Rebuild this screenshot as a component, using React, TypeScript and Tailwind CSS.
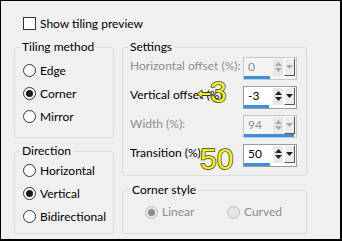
import type { ReactNode } from 'react';

const FONT = "font-['Lato','Noto_Sans',sans-serif]";

function Radio({ checked, disabled }: { checked?: boolean; disabled?: boolean }) {
  return (
    <span
      className={`flex h-[13px] w-[13px] shrink-0 items-center justify-center rounded-full border ${
        disabled ? 'border-[#bcbcbc] bg-[#e6e6e6]' : 'border-[#333] bg-white'
      }`}
    >
      {checked && (
        <span className={`h-[7px] w-[7px] rounded-full ${disabled ? 'bg-[#8c8c8c]' : 'bg-[#1a1a1a]'}`} />
      )}
    </span>
  );
}

function RadioRow({
  label,
  checked,
  disabled,
  className = '',
}: {
  label: string;
  checked?: boolean;
  disabled?: boolean;
  className?: string;
}) {
  return (
    <div className={`flex h-[23px] items-center gap-[4px] ${className}`}>
      <Radio checked={checked} disabled={disabled} />
      <span className={disabled ? 'text-[#8d8d8d]' : 'text-black'}>{label}</span>
    </div>
  );
}

function Group({
  title,
  className,
  legendClass = 'ml-[5px]',
  children,
}: {
  title: string;
  className: string;
  legendClass?: string;
  children: ReactNode;
}) {
  return (
    <fieldset className={`rounded-[3px] border border-[#dcdcdc] ${className}`}>
      <legend className={`px-[2px] leading-[16px] text-black ${legendClass}`}>{title}</legend>
      {children}
    </fieldset>
  );
}

function Spin({ value, pct, disabled }: { value: string; pct: number; disabled?: boolean }) {
  return (
    <div
      className={`flex h-[23px] w-[54px] shrink-0 flex-col border ${
        disabled ? 'border-[#c8c8c8] bg-[#f4f4f4]' : 'border-[#9a9a9a] bg-white'
      }`}
    >
      <div className="flex h-[19px] items-center">
        <span className={`flex-1 pl-[4px] text-[12px] ${disabled ? 'text-[#8d8d8d]' : 'text-black'}`}>
          {value}
        </span>
        <span className="flex h-[17px] w-[10px] flex-col items-center justify-center gap-[2px] bg-[#e8e8e8]">
          <svg width="7" height="4" viewBox="0 0 7 4">
            <polygon points="0,4 3.5,0 7,4" fill={disabled ? '#a8a8a8' : '#222'} />
          </svg>
          <svg width="7" height="4" viewBox="0 0 7 4">
            <polygon points="0,0 3.5,4 7,0" fill={disabled ? '#a8a8a8' : '#222'} />
          </svg>
        </span>
        <span className="ml-[1px] mr-[1px] flex h-[18px] w-[11px] items-center justify-center border border-b-[#555] border-l-white border-r-[#555] border-t-white bg-[#ececec]">
          <svg width="7" height="4" viewBox="0 0 7 4">
            <polygon points="0,0 3.5,4 7,0" fill={disabled ? '#a8a8a8' : '#222'} />
          </svg>
        </span>
      </div>
      <div className="h-[3px] bg-[#3b8ee0]" style={{ width: `${pct}%` }} />
    </div>
  );
}

function SettingRow({
  label,
  value,
  pct,
  disabled,
}: {
  label: string;
  value: string;
  pct: number;
  disabled?: boolean;
}) {
  return (
    <div className="flex h-[29px] items-start justify-between">
      <span className={`whitespace-nowrap leading-[18px] ${disabled ? 'text-[#8d8d8d]' : 'text-black'}`}>
        {label}
      </span>
      <Spin value={value} pct={pct} disabled={disabled} />
    </div>
  );
}

const ANNOT =
  "font-['Liberation_Sans',Arial,sans-serif] text-[30px] leading-none text-[#f2f21a] [-webkit-text-stroke:1.5px_#3a3a2a] [paint-order:stroke_fill]";

export default function App() {
  return (
    <div
      className={`relative h-[241px] w-[342px] overflow-hidden border border-b-2 border-r-2 border-black bg-[#f0f0f0] pl-[13px] pt-[14px] text-[12px] ${FONT}`}
    >
      <div className="flex h-[17px] items-center gap-[4px] pl-[9px]">
        <span className="h-[13px] w-[13px] border border-[#333] bg-white" />
        <span>Show tiling preview</span>
      </div>

      <div className="mt-[7px] flex gap-[8px]">
        <div className="flex w-[100px] flex-col gap-[5px]">
          <Group title="Tiling method" className="h-[99px]">
            <div className="pl-[8px] pt-[4px]">
              <RadioRow label="Edge" />
              <RadioRow label="Corner" checked />
              <RadioRow label="Mirror" />
            </div>
          </Group>
          <Group title="Direction" className="h-[91px]">
            <div className="pl-[8px]">
              <RadioRow label="Horizontal" />
              <RadioRow label="Vertical" checked />
              <RadioRow label="Bidirectional" />
            </div>
          </Group>
        </div>

        <div className="flex w-[185px] flex-col gap-[6px]">
          <Group title="Settings" className="h-[137px]">
            <div className="pl-[7px] pr-[9px] pt-[2px]">
              <SettingRow label="Horizontal offset (%):" value="0" pct={50} disabled />
              <SettingRow label="Vertical offset (%):" value="-3" pct={48} />
              <SettingRow label="Width (%):" value="94" pct={96} disabled />
              <SettingRow label="Transition (%):" value="50" pct={50} />
            </div>
          </Group>
          <Group title="Corner style" className="h-[52px]" legendClass="ml-[7px]">
            <div className="flex h-[28px] items-center pl-[22px]">
              <RadioRow label="Linear" checked disabled className="w-[82px]" />
              <RadioRow label="Curved" disabled />
            </div>
          </Group>
        </div>
      </div>

      <svg className="absolute left-[195px] top-[88px]" width="16" height="10" viewBox="0 0 16 10">
        <polygon
          points="1,5 6,1 6,3.5 15,3.5 15,6.5 6,6.5 6,9"
          fill="#f2f21a"
          stroke="#3a3a2a"
          strokeWidth="1"
        />
      </svg>
      <span className={`absolute left-[209px] top-[76px] ${ANNOT}`}>3</span>
      <span className={`absolute left-[199px] top-[143px] ${ANNOT}`}>50</span>
    </div>
  );
}
